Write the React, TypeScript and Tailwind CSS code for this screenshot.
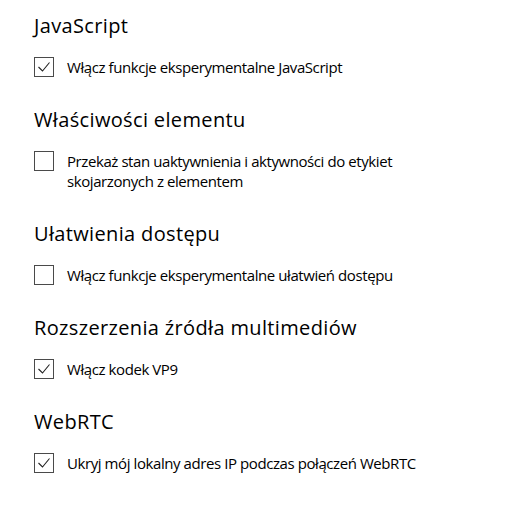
import React from "react";

type Item = { title: string; label: React.ReactNode; checked: boolean };

const items: Item[] = [
  { title: "JavaScript", label: "Włącz funkcje eksperymentalne JavaScript", checked: true },
  {
    title: "Właściwości elementu",
    label: (
      <>
        Przekaż stan uaktywnienia i aktywności do etykiet
        <br />
        skojarzonych z elementem
      </>
    ),
    checked: false,
  },
  { title: "Ułatwienia dostępu", label: "Włącz funkcje eksperymentalne ułatwień dostępu", checked: false },
  { title: "Rozszerzenia źródła multimediów", label: "Włącz kodek VP9", checked: true },
  { title: "WebRTC", label: "Ukryj mój lokalny adres IP podczas połączeń WebRTC", checked: true },
];

function Box({ checked }: { checked: boolean }) {
  return (
    <div className="w-5 h-5 shrink-0 border border-[#4a4a4a] bg-white">
      {checked && (
        <svg width="18" height="18" viewBox="0 0 18 18" className="block">
          <polyline points="3.5,9 7.5,13 14.5,4.5" fill="none" stroke="#222" strokeWidth="1.1" />
        </svg>
      )}
    </div>
  );
}

export default function App() {
  return (
    <div
      className="w-[505px] h-[512px] bg-white pl-[34px] pt-[12px] text-black"
      style={{ fontFamily: '"Segoe UI", "Open Sans", "Noto Sans", sans-serif' }}
    >
      {items.map((it, i) => (
        <div key={i} className="mb-[29px]">
          <div className="text-[20px] leading-[28px] tracking-[0.35px]">{it.title}</div>
          <div className="mt-[17px] flex items-start gap-[13px]">
            <Box checked={it.checked} />
            <div className="text-[15px] leading-[20px] tracking-[-0.42px]">{it.label}</div>
          </div>
        </div>
      ))}
    </div>
  );
}
